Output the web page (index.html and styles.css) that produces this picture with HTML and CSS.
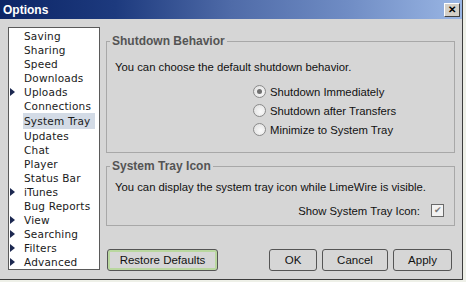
FILE: index.html
```html
<!DOCTYPE html>
<html lang="en">

<head>
    <meta charset="UTF-8">
    <meta name="viewport" content="width=device-width, initial-scale=1.0">
    <link rel="stylesheet" href="styles.css">
</head>

<body>
    <div class="window">
        <div class="titlebar">
            <span class="title">Options</span>
            <span class="close">&#x2715;</span>
        </div>

        <div class="content">
            <ul class="nav">
                <li>Saving</li>
                <li>Sharing</li>
                <li>Speed</li>
                <li>Downloads</li>
                <li class="sub">Uploads</li>
                <li>Connections</li>
                <li class="selected">System Tray</li>
                <li>Updates</li>
                <li>Chat</li>
                <li>Player</li>
                <li>Status Bar</li>
                <li class="sub">iTunes</li>
                <li>Bug Reports</li>
                <li class="sub">View</li>
                <li class="sub">Searching</li>
                <li class="sub">Filters</li>
                <li class="sub">Advanced</li>
            </ul>

            <div class="panel">
                <fieldset class="group group-shutdown">
                    <legend>Shutdown Behavior</legend>
                    <p>You can choose the default shutdown behavior.</p>
                    <div class="radios">
                        <label><span class="radio checked"></span>Shutdown Immediately</label>
                        <label><span class="radio"></span>Shutdown after Transfers</label>
                        <label><span class="radio"></span>Minimize to System Tray</label>
                    </div>
                </fieldset>

                <fieldset class="group group-tray">
                    <legend>System Tray Icon</legend>
                    <p>You can display the system tray icon while LimeWire is visible.</p>
                    <div class="check-row">
                        <span>Show System Tray Icon:</span>
                        <span class="checkbox">&#x2714;</span>
                    </div>
                </fieldset>

                <div class="buttons">
                    <button class="btn btn-focus btn-restore">Restore Defaults</button>
                    <div class="spacer"></div>
                    <button class="btn btn-ok">OK</button>
                    <button class="btn btn-cancel">Cancel</button>
                    <button class="btn btn-apply">Apply</button>
                </div>
            </div>
        </div>
    </div>
</body>

</html>
```

FILE: styles.css
```css
body {
    margin: 0;
    padding: 0;
    background: #eef0e8;
    font-family: "Liberation Sans", Arial, sans-serif;
    font-size: 11.3px;
}

.window {
    width: 462px;
    height: 279px;
    background: #d6d6d6;
    border-right: 1px solid #3c3c3c;
    border-bottom: 1px solid #3c3c3c;
    box-sizing: content-box;
}

.titlebar {
    height: 19px;
    display: flex;
    align-items: center;
    justify-content: space-between;
    padding: 0 2px 0 3px;
    background: linear-gradient(to right, #0c2566 0%, #1d3a7e 25%, #4f6ba8 50%, #6f8cc4 75%, #9ab6e4 100%);
}

.title {
    color: #fff;
    font-weight: bold;
    font-size: 12px;
}

.close {
    width: 14px;
    height: 12px;
    background: #d4d0c8;
    border-top: 1px solid #fff;
    border-left: 1px solid #fff;
    border-right: 1px solid #404040;
    border-bottom: 1px solid #404040;
    color: #000;
    font-size: 10px;
    font-weight: bold;
    line-height: 12px;
    text-align: center;
}

.content {
    display: flex;
    padding: 8px 0 0 8px;
}

.nav {
    list-style: none;
    margin: 0;
    padding: 1px 0 0 0;
    width: 90px;
    height: 240px;
    background: #fff;
    border: 1px solid #5a5a5a;
    font-family: "DejaVu Sans", Verdana, sans-serif;
    font-size: 10.5px;
    letter-spacing: 0.2px;
    color: #1a1a1a;
}

.nav li {
    position: relative;
    height: 14px;
    line-height: 14px;
    padding-left: 15px;
    margin-right: 4px;
}

.nav li.selected {
    margin-left: 14px;
    padding-left: 1px;
    height: 16px;
    line-height: 16px;
    background: #d3dbe6;
}

.nav li.sub::before {
    content: "";
    position: absolute;
    left: 1px;
    top: 3px;
    border-top: 4px solid transparent;
    border-bottom: 4px solid transparent;
    border-left: 5px solid #1c2850;
}

.panel {
    width: 362px;
}

.group {
    margin: 7px 7px 0 6px;
    padding: 0 8px;
    border: 1px solid #a8a8a8;
    box-sizing: border-box;
    min-width: 0;
}

.group legend {
    padding: 0 2px;
    margin-left: -5px;
    color: #545454;
    font-weight: bold;
    font-size: 12px;
    line-height: 14px;
}

.group p {
    margin: 0;
    line-height: 14px;
    color: #111;
}

.group-shutdown {
    height: 119px;
}

.group-shutdown p {
    margin-top: 12px;
}

.radios {
    display: flex;
    flex-direction: column;
    margin: 8px 0 0 138px;
}

.radios label {
    display: flex;
    align-items: center;
    height: 19px;
    color: #111;
}

.radio {
    width: 11px;
    height: 11px;
    margin-right: 4px;
    border: 1px solid #8a8a8a;
    border-radius: 50%;
    background: radial-gradient(circle at 60% 60%, #fafafa 0%, #dcdcdc 100%);
    position: relative;
}

.radio.checked::after {
    content: "";
    position: absolute;
    left: 3px;
    top: 3px;
    width: 5px;
    height: 5px;
    border-radius: 50%;
    background: #707070;
}

.group-tray {
    margin-top: 6px;
    height: 67px;
}

.group-tray p {
    margin-top: 7px;
}

.check-row {
    display: flex;
    justify-content: flex-end;
    align-items: center;
    margin-top: 10px;
    padding-right: 2px;
    color: #111;
}

.checkbox {
    width: 11px;
    height: 11px;
    margin-left: 11px;
    border: 1px solid #6a6a6a;
    background: #f2f2f2;
    color: #7a7a7a;
    font-size: 9px;
    line-height: 11px;
    text-align: center;
}

.buttons {
    display: flex;
    gap: 5px;
    margin: 23px 10px 0 7px;
}

.spacer {
    flex: 1;
}

.btn {
    height: 22px;
    padding: 0;
    background: #d6d6d6;
    border: 1px solid #555;
    border-radius: 3px;
    font-family: "Liberation Sans", Arial, sans-serif;
    font-size: 11.5px;
    color: #111;
}

.btn-focus {
    box-shadow: inset 0 0 0 2px #b9d79f;
}

.btn-restore {
    width: 111px;
}

.btn-ok {
    width: 48px;
}

.btn-cancel {
    width: 66px;
}

.btn-apply {
    width: 59px;
}
```
